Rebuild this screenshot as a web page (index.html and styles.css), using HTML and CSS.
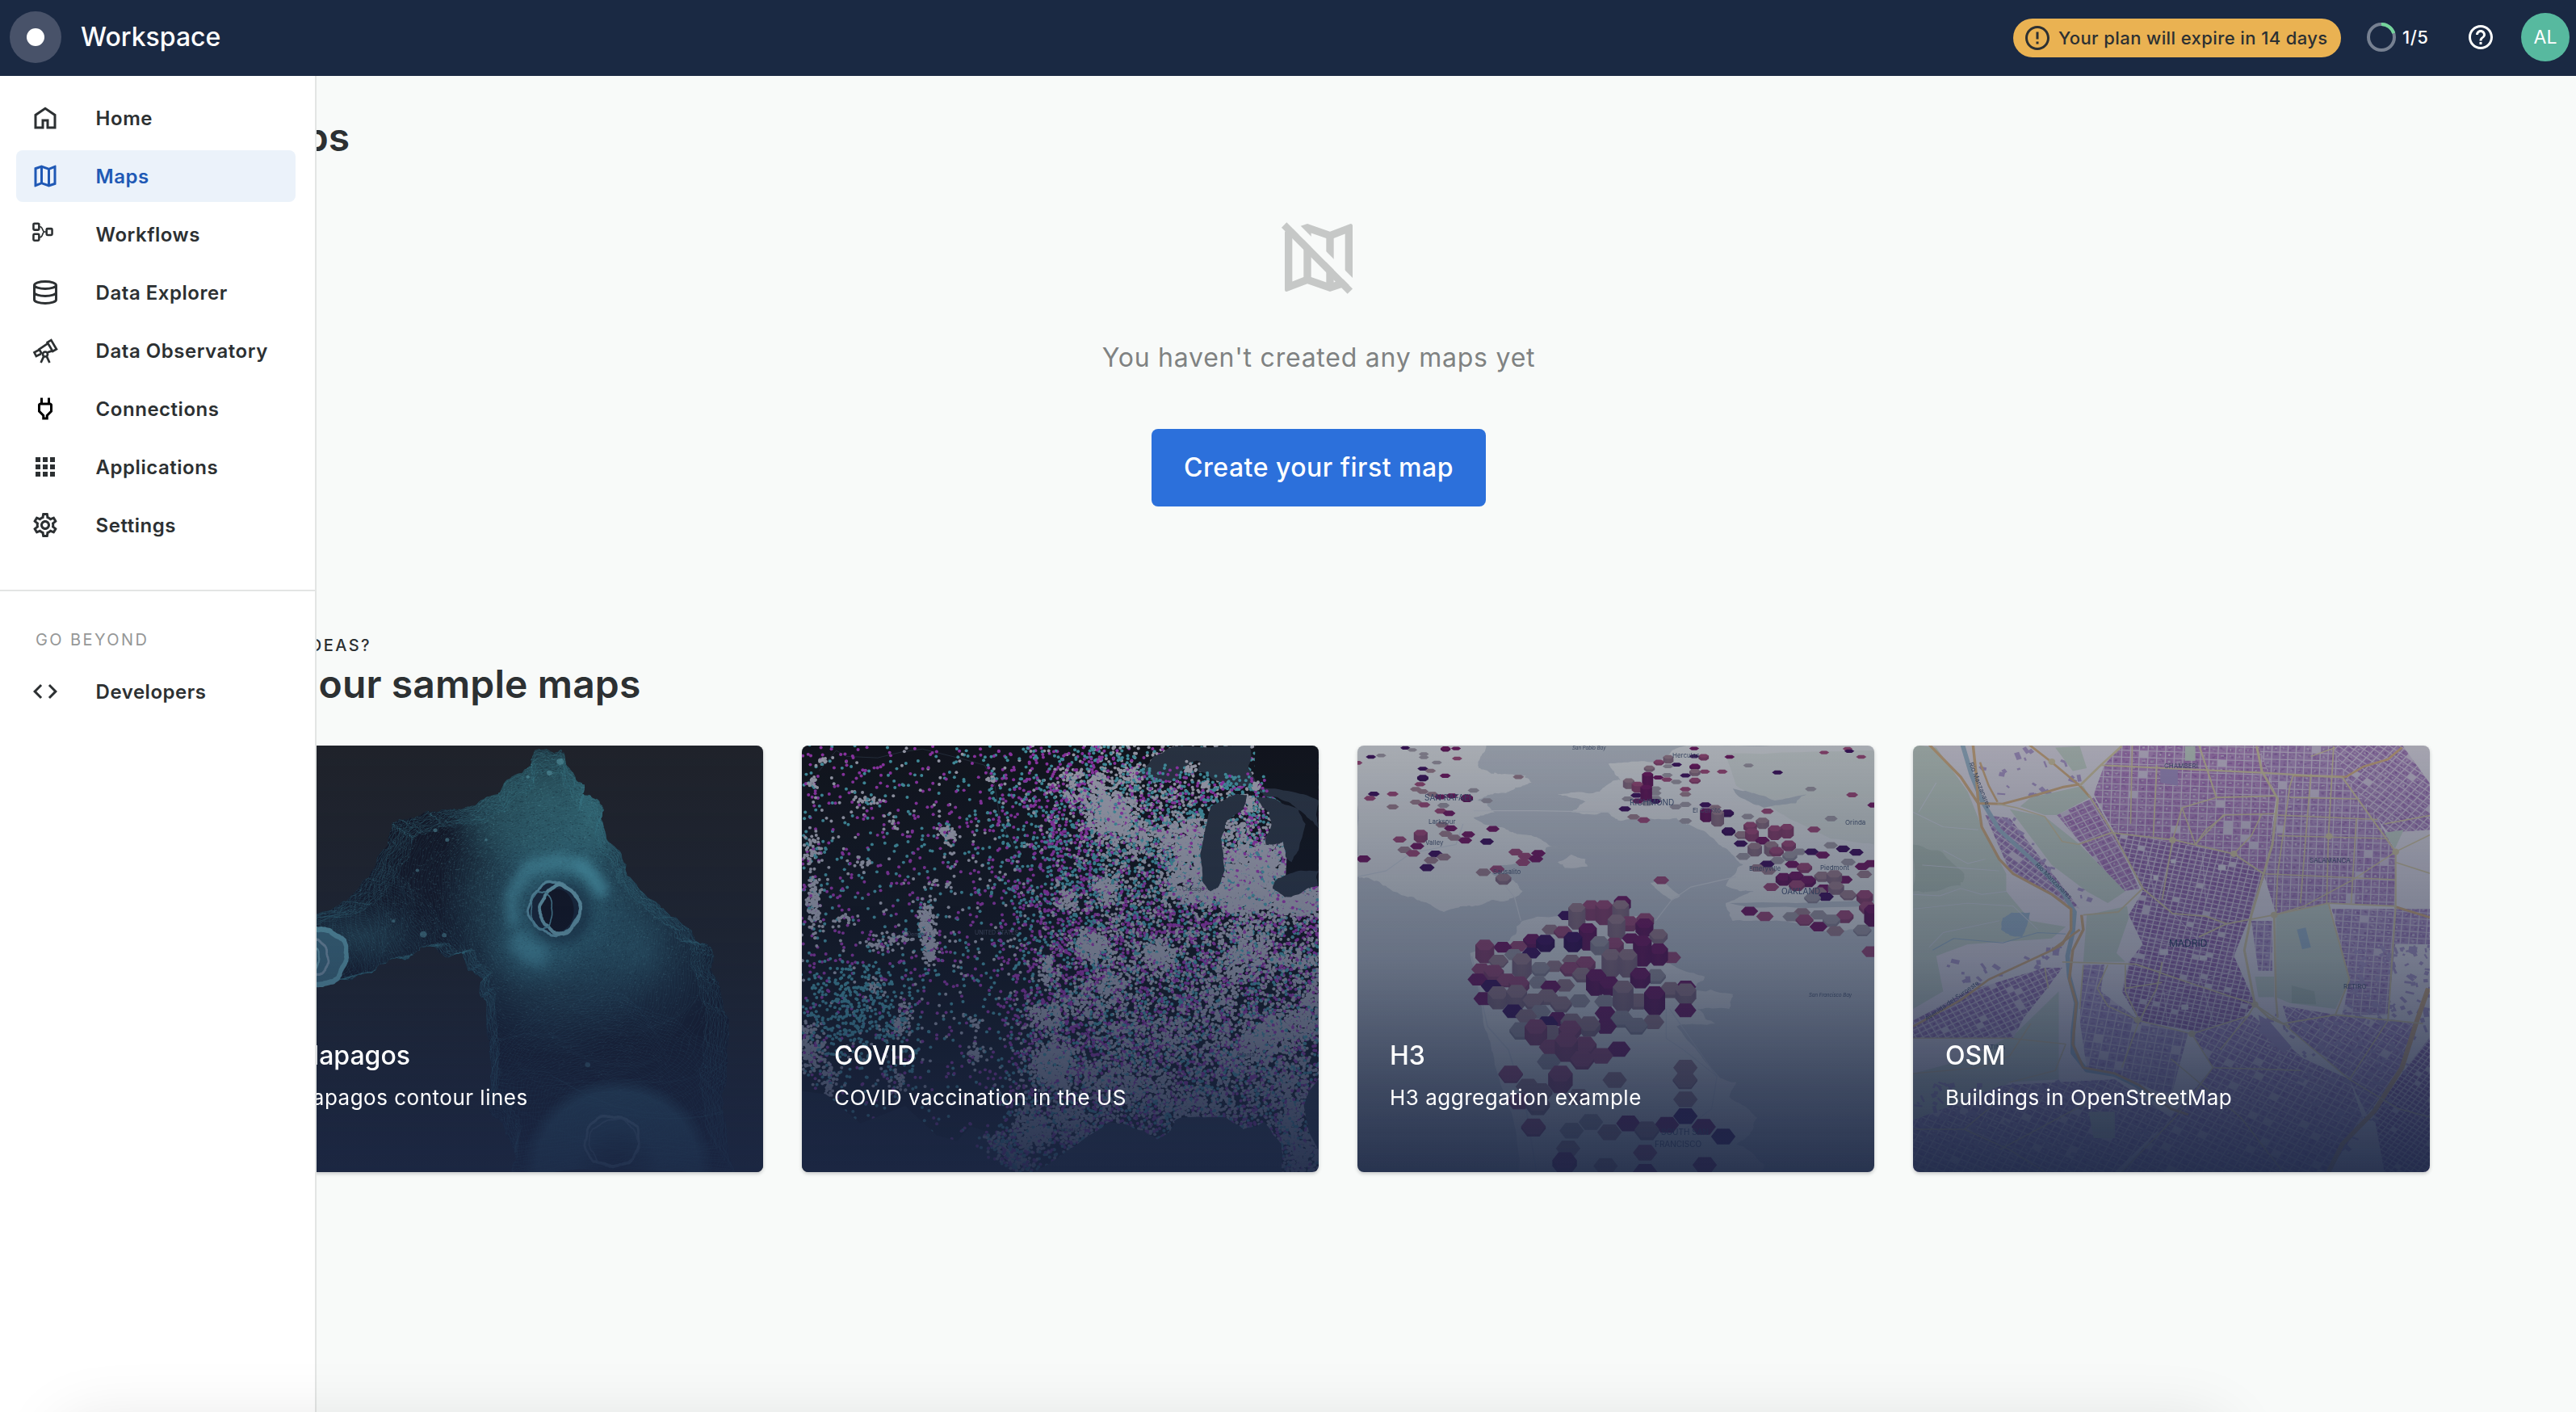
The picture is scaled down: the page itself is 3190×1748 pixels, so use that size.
FILE: index.html
```html
<!DOCTYPE html>
<html lang="en">
<head>
<meta charset="utf-8">
<title>Workspace</title>
<link rel="stylesheet" href="styles.css">
</head>
<body>
<header class="topbar">
  <span class="logo"><span class="logo-dot"></span></span>
  <span class="brand">Workspace</span>
  <div class="topbar-right">
    <span class="plan-pill">
      <svg class="icon" viewBox="0 0 24 24"><path d="M11 15h2v2h-2zm0-8h2v6h-2zm.99-5C6.47 2 2 6.48 2 12s4.47 10 9.99 10C17.52 22 22 17.52 22 12S17.52 2 11.99 2zM12 20c-4.42 0-8-3.58-8-8s3.58-8 8-8 8 3.58 8 8-3.58 8-8 8z"/></svg>
      Your plan will expire in 14 days
    </span>
    <span class="usage">
      <svg class="ring" viewBox="0 0 36 36"><circle cx="18" cy="18" r="16" class="ring-track"/><circle cx="18" cy="18" r="16" class="ring-value" pathLength="100" stroke-dasharray="20 80" transform="rotate(-90 18 18)"/></svg>
      1/5
    </span>
    <svg class="icon help" viewBox="0 0 24 24"><path d="M11 18h2v-2h-2v2zm1-16C6.48 2 2 6.48 2 12s4.48 10 10 10 10-4.48 10-10S17.52 2 12 2zm0 18c-4.41 0-8-3.59-8-8s3.59-8 8-8 8 3.59 8 8-3.59 8-8 8zm0-14c-2.21 0-4 1.79-4 4h2c0-1.1.9-2 2-2s2 .9 2 2c0 2-3 1.75-3 5h2c0-2.25 3-2.5 3-5 0-2.21-1.79-4-4-4z"/></svg>
    <span class="avatar">AL</span>
  </div>
</header>

<div class="shell">
  <aside class="drawer">
    <nav class="nav">
      <a class="nav-item"><svg class="icon" viewBox="0 0 24 24"><path d="M3 21V9l9-6 9 6v12h-8v-6h-2v6H3zm2-2h4v-6h6v6h4v-8.9l-7-4.7-7 4.7V19z"/></svg>Home</a>
      <a class="nav-item active"><svg class="icon" viewBox="0 0 24 24"><path d="M20.5 3l-.16.03L15 5.1 9 3 3.36 4.9c-.21.07-.36.25-.36.48V20.5c0 .28.22.5.5.5l.16-.03L9 18.9l6 2.1 5.64-1.9c.21-.07.36-.25.36-.48V3.5c0-.28-.22-.5-.5-.5zM10 5.47l4 1.4v11.66l-4-1.4V5.47zm-5 .99l3-1.01v11.7l-3 1.16V6.46zm14 11.08l-3 1.01V6.86l3-1.16v11.84z"/></svg>Maps</a>
      <a class="nav-item"><svg class="icon line thin" viewBox="0 0 24 24"><rect x="2.3" y="3.1" width="4.6" height="5.3" rx=".8"/><rect x="2.3" y="11.8" width="4.6" height="5.3" rx=".8"/><rect x="13.1" y="7.4" width="4.6" height="5.3" rx=".8"/><path class="hair" d="M7 5.8h1c2 0 1.6 4.2 3.4 4.2H13M7 14.4h1c2 0 1.6-4.4 3.4-4.4"/></svg>Workflows</a>
      <a class="nav-item"><svg class="icon line" viewBox="0 0 24 24"><ellipse cx="12" cy="6" rx="9" ry="3"/><path d="M3 6v12c0 1.66 4 3 9 3s9-1.34 9-3V6M3 12c0 1.66 4 3 9 3s9-1.34 9-3"/></svg>Data Explorer</a>
      <a class="nav-item"><svg class="icon line scope" viewBox="0 0 24 24"><path d="M13.8 5.3l3.1-1.9 4.4 7.4-3.1 1.8zM14.2 6.1L7 10.9l2.2 3.8M13.9 13.5l4.2-1.4M7 11.3l-4 2.2 1.6 3.2 4-2M10.9 16.6L8.4 22M13.1 16.6l2.5 5.4"/><circle cx="12" cy="15" r="2"/></svg>Data Observatory</a>
      <a class="nav-item"><svg class="icon plug" viewBox="0 0 24 24"><path d="M16 9v4.66l-3.5 3.51V19h-1v-1.83L8 13.65V9h8m0-6h-2v4h-4V3H8v4h-.01C6.9 6.99 6 7.89 6 8.98v5.52L9.5 18v3h5v-3l3.5-3.51V9c0-1.1-.9-2-2-2V3z"/></svg>Connections</a>
      <a class="nav-item"><svg class="icon" viewBox="0 0 24 24"><path d="M4 8h4V4H4v4zm6 12h4v-4h-4v4zm-6 0h4v-4H4v4zm0-6h4v-4H4v4zm6 0h4v-4h-4v4zm6-10v4h4V4h-4zm-6 4h4V4h-4v4zm6 6h4v-4h-4v4zm0 6h4v-4h-4v4z"/></svg>Applications</a>
      <a class="nav-item"><svg class="icon" viewBox="0 0 24 24"><path d="M19.43 12.98c.04-.32.07-.64.07-.98 0-.34-.03-.66-.07-.98l2.11-1.65c.19-.15.24-.42.12-.64l-2-3.46c-.09-.16-.26-.25-.44-.25-.06 0-.12.01-.17.03l-2.49 1c-.52-.4-1.08-.73-1.69-.98l-.38-2.65C14.46 2.18 14.25 2 14 2h-4c-.25 0-.46.18-.49.42l-.38 2.65c-.61.25-1.17.59-1.69.98l-2.49-1c-.06-.02-.12-.03-.18-.03-.17 0-.34.09-.43.25l-2 3.46c-.13.22-.07.49.12.64l2.11 1.65c-.04.32-.07.65-.07.98 0 .33.03.66.07.98l-2.11 1.65c-.19.15-.24.42-.12.64l2 3.46c.09.16.26.25.44.25.06 0 .12-.01.17-.03l2.49-1c.52.4 1.08.73 1.69.98l.38 2.65c.03.24.24.42.49.42h4c.25 0 .46-.18.49-.42l.38-2.65c.61-.25 1.17-.59 1.69-.98l2.49 1c.06.02.12.03.18.03.17 0 .34-.09.43-.25l2-3.46c.12-.22.07-.49-.12-.64l-2.11-1.65zm-1.98-1.71c.04.31.05.52.05.73 0 .21-.02.43-.05.73l-.14 1.13.89.7 1.08.84-.7 1.21-1.27-.51-1.04-.42-.9.68c-.43.32-.84.56-1.25.73l-1.06.43-.16 1.13-.2 1.35h-1.4l-.19-1.35-.16-1.13-1.06-.43c-.43-.18-.83-.41-1.23-.71l-.91-.7-1.06.43-1.27.51-.7-1.21 1.08-.84.89-.7-.14-1.13c-.03-.31-.05-.54-.05-.74s.02-.43.05-.73l.14-1.13-.89-.7-1.08-.84.7-1.21 1.27.51 1.04.42.9-.68c.43-.32.84-.56 1.25-.73l1.06-.43.16-1.13.2-1.35h1.39l.19 1.35.16 1.13 1.06.43c.43.18.83.41 1.23.71l.91.7 1.06-.43 1.27-.51.7 1.21-1.07.85-.89.7.14 1.13zM12 8c-2.21 0-4 1.79-4 4s1.79 4 4 4 4-1.79 4-4-1.79-4-4-4zm0 6c-1.1 0-2-.9-2-2s.9-2 2-2 2 .9 2 2-.9 2-2 2z"/></svg>Settings</a>
    </nav>
    <div class="nav-group">
      <div class="nav-label">GO BEYOND</div>
      <a class="nav-item"><svg class="icon" viewBox="0 0 24 24"><path d="M9.4 16.6L4.8 12l4.6-4.6L8 6l-6 6 6 6 1.4-1.4zm5.2 0l4.6-4.6-4.6-4.6L16 6l6 6-6 6-1.4-1.4z"/></svg>Developers</a>
    </div>
  </aside>

  <main class="content">
    <h1 class="page-title">Maps</h1>
    <section class="empty">
      <svg class="empty-icon" viewBox="0 0 24 24">
        <mask id="cut"><path fill="#fff" d="M0 0h24v24H0z"/><path fill="#000" d="M.8 0h2.85L24 20.35v2.85z"/></mask>
        <path mask="url(#cut)" d="M20.5 3l-.16.03L15 5.1 9 3 3.36 4.9c-.21.07-.36.25-.36.48V20.5c0 .28.22.5.5.5l.16-.03L9 18.9l6 2.1 5.64-1.9c.21-.07.36-.25.36-.48V3.5c0-.28-.22-.5-.5-.5zM10 5.47l4 1.4v11.66l-4-1.4V5.47zm-5 .99l3-1.01v11.7l-3 1.16V6.46zm14 11.08l-3 1.01V6.86l3-1.16v11.84z"/>
        <path d="M2.15 4l1.35-1.35L21 20.25l-1.35 1.35z"/>
      </svg>
      <p class="empty-text">You haven't created any maps yet</p>
      <button class="cta">Create your first map</button>
    </section>

    <section class="samples">
      <div class="eyebrow">NEED IDEAS?</div>
      <h2 class="samples-title">Try our sample maps</h2>
      <div class="cards">
        <article class="card">
          <canvas class="card-art" id="galapagos" width="640" height="528"></canvas>
          <div class="card-body"><h3 class="card-title">Galapagos</h3><p class="card-text">Galapagos contour lines</p></div>
        </article>
        <article class="card">
          <canvas class="card-art" id="covid" width="640" height="528"></canvas>
          <svg class="card-labels on-dark" viewBox="0 0 640 528">
            <text x="471" y="180">Chicago</text><text x="214" y="234">UNITED STATES</text><text x="130" y="236">Denver</text><text x="538" y="385">Atlanta</text><text x="317" y="478">Houston</text>
          </svg>
          <div class="card-body"><h3 class="card-title">COVID</h3><p class="card-text">COVID vaccination in the US</p></div>
        </article>
        <article class="card">
          <canvas class="card-art" id="hexes" width="640" height="528"></canvas>
          <svg class="card-labels" viewBox="0 0 640 528">
            <text x="83" y="68" class="city">SAN RAFAEL</text><text x="88" y="97">Larkspur</text><text x="84" y="123">Valley</text><text x="604" y="98">Orinda</text><text x="168" y="159">Sausalito</text><text x="337" y="74" class="city">RICHMOND</text><text x="415" y="83">El Cerrito</text><text x="390" y="15">Hercules</text><text x="485" y="155">Emeryville</text><text x="573" y="154">Piedmont</text><text x="525" y="184" class="city">OAKLAND</text><text x="559" y="311" class="bay">San Francisco Bay</text><text x="266" y="5" class="bay">San Pablo Bay</text><text x="376" y="482" class="city">SOUTH SAN</text><text x="368" y="497" class="city">FRANCISCO</text>
          </svg>
          <div class="card-body"><h3 class="card-title">H3</h3><p class="card-text">H3 aggregation example</p></div>
        </article>
        <article class="card">
          <canvas class="card-art" id="osm" width="640" height="528"></canvas>
          <svg class="card-labels" viewBox="0 0 640 528">
            <text x="311" y="28">CHAMBERÍ</text><text x="491" y="145">SALAMANCA</text><text x="317" y="249" class="city madrid">MADRID</text><text x="533" y="301">RETIRO</text><text x="86" y="376">LATINA</text><text transform="translate(17 341) rotate(-35)">Avenida del Suroeste</text><text transform="translate(69 22) rotate(68)">Río Manzanares</text><text transform="translate(151 148) rotate(45)">Río Manzanares</text>
          </svg>
          <div class="card-body"><h3 class="card-title">OSM</h3><p class="card-text">Buildings in OpenStreetMap</p></div>
        </article>
      </div>
    </section>
  </main>
  <div class="edge-shade"></div>
</div>
<script src="art.js"></script>
</body>
</html>
```
FILE: styles.css
```css
* { box-sizing: border-box; }
body {
  margin: 0;
  height: 1748px;
  display: flex;
  flex-direction: column;
  overflow: hidden;
  font-family: Inter, "Liberation Sans", sans-serif;
  color: #2c3032;
  background: #f8faf9;
}
h1, h2, h3, p { margin: 0; }
.icon { width: 36px; height: 36px; flex: none; fill: currentColor; }
.icon.line { fill: none; stroke: currentColor; stroke-width: 2; }
.icon.thin { stroke-width: 1.7; }
.icon .hair { stroke-width: 1.1; }
.icon.scope { stroke-width: 1.8; }
.icon.plug { color: #000; }

.topbar {
  height: 94px;
  flex: none;
  display: flex;
  align-items: center;
  padding: 0 8px 2px 12px;
  background: #1a2943;
  color: #fff;
}
.logo {
  width: 64px;
  height: 64px;
  border-radius: 50%;
  display: grid;
  place-items: center;
  background: #485269;
}
.logo-dot { width: 22px; height: 22px; border-radius: 50%; background: #fff; }
.brand { margin-left: 24px; font-size: 32px; font-weight: 500; line-height: 48px; }
.topbar-right { margin-left: auto; display: flex; align-items: center; }
.plan-pill {
  height: 48px;
  width: 406px;
  margin-top: 2px;
  padding-left: 12px;
  display: flex;
  align-items: center;
  gap: 8px;
  border-radius: 24px;
  background: #eab252;
  color: #2c3032;
  font-size: 22px;
  font-weight: 500;
  letter-spacing: .4px;
  white-space: nowrap;
}
.usage { margin-left: 32px; width: 123px; display: flex; align-items: center; gap: 8px; font-size: 22px; font-weight: 500; letter-spacing: .5px; }
.ring { width: 36px; height: 36px; fill: none; stroke-width: 4; }
.ring-track { stroke: #768091; }
.ring-value { stroke: #74d59b; }
.help { margin-right: 32px; }
.avatar {
  width: 60px;
  height: 60px;
  border-radius: 50%;
  display: grid;
  place-items: center;
  background: #57b99f;
  color: #fff;
  font-size: 23px;
}

.shell { position: relative; flex: 1; overflow: hidden; }
.drawer {
  position: absolute;
  z-index: 2;
  inset: 0 auto 0 0;
  width: 392px;
  background: #fff;
  border-right: 2px solid #e3e5e4;
}
.nav { display: flex; flex-direction: column; gap: 8px; padding: 20px 24px 48px 20px; }
.nav-item {
  height: 64px;
  display: flex;
  align-items: center;
  gap: 44.6px;
  padding-left: 18px;
  border-radius: 8px;
  font-size: 24px;
  font-weight: 600;
  letter-spacing: .53px;
}
.nav-item.active { background: #ebf2fa; color: #2059b5; }
.nav-group { border-top: 2px solid #e3e5e4; padding: 44px 24px 0 20px; }
.nav-label { padding: 0 0 16px 24px; font-size: 20px; line-height: 32px; letter-spacing: 2.4px; color: #959797; }

.content { padding: 44px 181px 0 257px; }
.page-title { padding-left: 48px; font-size: 48px; line-height: 64px; font-weight: 600; }
.empty { display: flex; flex-direction: column; align-items: center; padding-top: 61px; }
.empty-icon { width: 112px; height: 112px; fill: #c6c8c7; }
.empty-text { margin-top: 44px; font-size: 32px; line-height: 48px; letter-spacing: .76px; color: #7f8282; }
.cta {
  width: 414px;
  height: 96px;
  margin-top: 64px;
  padding: 0;
  border: 0;
  border-radius: 8px;
  background: #2c70db;
  color: #fff;
  font: 500 32px/48px Inter, "Liberation Sans", sans-serif;
  letter-spacing: .5px;
}
.samples { padding: 156px 0 0 48px; }
.eyebrow { font-size: 20px; line-height: 32px; font-weight: 500; letter-spacing: 2.4px; }
.samples-title { font-size: 48px; line-height: 64px; font-weight: 600; letter-spacing: .12px; }
.cards { display: grid; grid-template-columns: repeat(4, 640px); gap: 48px; margin-top: 44px; }
.card {
  position: relative;
  height: 528px;
  border-radius: 8px;
  overflow: hidden;
  display: flex;
  flex-direction: column;
  justify-content: flex-end;
  color: #fff;
  box-shadow: 0 2px 4px rgba(44, 48, 50, .25);
}
.card-art, .card-labels { position: absolute; inset: 0; width: 640px; height: 528px; }
.card-labels { font-size: 8px; fill: #4c5b78; }
.card-labels.on-dark { font-size: 7px; fill: #5a6070; }
.card-labels .city { font-size: 10px; fill: #44557a; }
.card-labels .madrid { font-size: 12px; fill: #2c4468; }
.card-labels .bay { font-size: 6px; font-style: italic; }
.card::after {
  content: "";
  position: absolute;
  inset: 0;
  background: linear-gradient(rgba(24, 30, 48, .33), rgba(24, 36, 62, .56) 50%, rgba(26, 38, 66, .8) 80%, rgba(27, 39, 68, .93));
}
.card-body { position: relative; z-index: 1; padding: 0 40px 72px; }
.card-title { font-size: 32px; line-height: 48px; font-weight: 500; }
.card-text { margin-top: 8px; font-size: 26px; line-height: 40px; letter-spacing: .5px; }
.edge-shade {
  position: absolute;
  z-index: 3;
  left: 70px;
  bottom: -110px;
  width: 2690px;
  height: 100px;
  border-radius: 40px;
  box-shadow: 0 0 80px rgba(0, 0, 0, .1);
}
```
FILE: art.js
```js
// Paints the preview picture of each sample map card.
let seed = 7;
const rnd = () => { seed = (seed * 1664525 + 1013904223) >>> 0; return seed / 4294967296; };
const gauss = () => (rnd() + rnd() + rnd() + rnd() - 2) * 1.2;
const setup = (id, sx, sy, dx, dy) => {
  const c = document.getElementById(id).getContext('2d');
  c.setTransform(1 / sx, 0, 0, 1 / sy, dx, dy);
  return c;
};
const trace = (c, pts, close = true) => {
  c.beginPath();
  for (let i = 0; i < pts.length; i += 2) i ? c.lineTo(pts[i], pts[i + 1]) : c.moveTo(pts[0], pts[1]);
  if (close) c.closePath();
};
const poly = (c, color, pts) => { trace(c, pts); c.fillStyle = color; c.fill(); };
const line = (c, color, w, pts) => { trace(c, pts, false); c.strokeStyle = color; c.lineWidth = w; c.lineJoin = 'round'; c.stroke(); };
// Roughens a polygon outline into a coast-like one.
const rough = (pts, amp, rounds = 3) => {
  for (let r = 0; r < rounds; r++) {
    const out = [];
    for (let i = 0; i < pts.length; i += 2) {
      const j = (i + 2) % pts.length;
      out.push(pts[i], pts[i + 1], (pts[i] + pts[j]) / 2 + gauss() * amp, (pts[i + 1] + pts[j + 1]) / 2 + gauss() * amp);
    }
    pts = out; amp /= 2;
  }
  return pts;
};
const inside = (pts, x, y) => {
  let r = false;
  for (let i = 0, j = pts.length - 2; i < pts.length; j = i, i += 2)
    if ((pts[i + 1] > y) !== (pts[j + 1] > y) && x < (pts[j] - pts[i]) * (y - pts[i + 1]) / (pts[j + 1] - pts[i + 1]) + pts[i]) r = !r;
  return r;
};

function galapagos() {
  const c = setup('galapagos', 2.7034, 2.119, 75, -183);
  c.fillStyle = '#232528'; c.fillRect(-400, 300, 2100, 1400);
  const land = rough([-210, 900, 30, 830, 170, 765, 270, 650, 285, 590, 400, 560, 500, 555, 640, 515, 720, 460, 760, 405, 860, 405, 930, 490, 975, 530, 1010, 640, 1090, 740, 1200, 820, 1300, 900, 1365, 940, 1380, 1010, 1410, 1100, 1405, 1250, 1390, 1340, 1440, 1520, 680, 1520, 690, 1440, 610, 1350, 612, 1200, 600, 1060, 590, 1000, 520, 930, 400, 915, 300, 945, 170, 990, 60, 1010, -200, 1060], 16, 4);
  poly(c, '#10121d', land);
  c.save(); trace(c, land); c.clip();
  const glow = (x, y, rx, ry, stops) => {
    c.save(); c.translate(x, y); c.scale(1, ry / rx);
    const g = c.createRadialGradient(0, 0, 0, 0, 0, rx);
    stops.forEach(([o, col]) => g.addColorStop(o, col));
    c.fillStyle = g; c.fillRect(-rx, -rx, 2 * rx, 2 * rx); c.restore();
  };
  glow(840, 790, 400, 420, [[0, 'rgba(75,175,190,.9)'], [.4, 'rgba(70,165,180,.6)'], [.7, 'rgba(62,145,155,.35)'], [1, 'rgba(50,130,145,0)']]);
  glow(800, 540, 360, 190, [[0, 'rgba(70,155,160,.6)'], [.6, 'rgba(65,145,150,.45)'], [1, 'rgba(60,140,150,0)']]);
  glow(950, 580, 120, 220, [[0, 'rgba(80,175,180,.45)'], [1, 'rgba(60,140,150,0)']]);
  glow(1120, 930, 300, 240, [[0, 'rgba(65,145,160,.6)'], [1, 'rgba(50,120,140,0)']]);
  glow(750, 920, 170, 120, [[0, 'rgba(85,190,205,.6)'], [1, 'rgba(60,150,165,0)']]);
  glow(180, 890, 250, 100, [[0, 'rgba(70,150,160,.45)'], [1, 'rgba(60,140,150,0)']]);
  const contours = (x, y, from, to, step, sq, color, amp) => {
    const p = [rnd() * 6, rnd() * 6, rnd() * 6];
    c.lineWidth = 1.3; c.strokeStyle = color;
    for (let r = from; r < to; r += step) {
      c.beginPath();
      for (let a = 0; a <= 6.3; a += .03) {
        const q = r * (1 + amp * Math.sin(3 * a + p[0]) + amp * .6 * Math.sin(5 * a + p[1] + r / 90) + amp * .3 * Math.sin(13 * a + p[2] + r / 25) + amp * .12 * Math.sin(31 * a + r / 9)) + gauss() * 2.5;
        c.lineTo(x + q * Math.cos(a), y + q * sq * Math.sin(a));
      }
      c.stroke();
    }
  };
  contours(820, 820, 130, 560, 7, .85, 'rgba(100,205,215,.22)', .05);
  contours(820, 820, 560, 900, 12, .85, 'rgba(90,195,205,.30)', .06);
  contours(1010, 1420, 80, 480, 9, .8, 'rgba(90,190,210,.30)', .05);
  contours(30, 940, 80, 500, 9, .5, 'rgba(90,195,205,.28)', .05);
  // Shoreline contours that follow the outline of the land.
  for (let k = 1; k > .86; k -= .011) {
    c.beginPath();
    for (let i = 0; i < land.length; i += 2) c.lineTo(820 + (land[i] - 820) * k + gauss() * 3, 860 + (land[i + 1] - 860) * k + gauss() * 3);
    c.closePath(); c.lineWidth = 1.6; c.strokeStyle = 'rgba(80,175,185,.42)'; c.stroke();
  }
  for (let i = 0; i < 22000; i++) {
    const x = 780 + gauss() * 520, y = 760 + gauss() * 400;
    c.fillStyle = rnd() < .5 ? 'rgba(15,22,34,.22)' : 'rgba(120,215,220,.22)';
    c.fillRect(x, y, 2.7 + rnd() * 3, 2.2);
  }
  glow(1040, 1500, 320, 240, [[0, 'rgba(20,40,55,.5)'], [.45, 'rgba(80,170,200,.6)'], [.85, 'rgba(80,170,195,.6)'], [.95, 'rgba(60,130,150,.3)'], [1, 'rgba(50,130,150,0)']]);
  c.restore();
  const ring = (x, y, rx, ry, w, color, rot = 0) => {
    c.beginPath();
    for (let a = 0; a < 6.3; a += .05) { const k = 1 + .04 * Math.sin(4 * a + rx) + .025 * Math.sin(9 * a) + gauss() * .012; c.lineTo(x + rx * k * Math.cos(a + rot), y + ry * k * Math.sin(a + rot)); }
    c.closePath(); c.lineWidth = w; c.strokeStyle = color; c.stroke();
  };
  c.filter = 'blur(6px)';
  line(c, 'rgba(100,210,225,.6)', 42, [690, 860, 685, 780, 740, 710, 840, 690, 930, 705, 1000, 780]);
  line(c, 'rgba(100,215,230,.6)', 30, [900, 700, 950, 725, 990, 775]);
  line(c, 'rgba(100,210,225,.5)', 60, [690, 890, 740, 930, 800, 945]);
  c.fillStyle = 'rgba(22,50,66,.6)'; c.beginPath(); c.ellipse(850, 825, 105, 85, 0, 0, 7); c.fill();
  c.filter = 'none';
  c.beginPath(); c.ellipse(828, 815, 84, 68, 0, 0, 7); c.fillStyle = '#16283a'; c.fill();
  c.beginPath(); c.ellipse(838, 820, 56, 56, .3, 0, 7); c.fillStyle = '#0c0e18'; c.fill();
  ring(828, 815, 84, 68, 7, '#7ccbdc'); ring(848, 818, 66, 62, 10, '#8ad6e4', .3); ring(786, 820, 36, 50, 4, '#6ab9ca');
  c.beginPath(); c.ellipse(30, 940, 108, 76, 0, 0, 7); c.fillStyle = '#4b8a9c'; c.fill();
  ring(30, 940, 104, 74, 14, '#79d2e0'); ring(10, 945, 62, 50, 7, '#a0c8da'); ring(0, 945, 42, 36, 6, '#8fdbe6');
  ring(1022, 1425, 92, 66, 7, '#7fb4cc'); ring(1028, 1430, 82, 62, 4, '#6fa0bc');
  [[390, 883, 12], [370, 715, 6], [430, 610, 7], [470, 635, 7], [812, 460, 9], [848, 430, 12], [740, 470, 6], [600, 635, 5], [460, 885, 8], [290, 848, 6], [940, 1225, 9]].forEach(([x, y, r]) => { c.beginPath(); c.ellipse(x, y, r, r * .7, 0, 0, 7); c.fillStyle = 'rgba(120,215,225,.55)'; c.fill(); });
}

function covid() {
  const c = setup('covid', 2.3403, 2.751, -13, -23);
  c.fillStyle = '#0e1014'; c.fillRect(0, 0, 1600, 1600);
  const water = '#303b48';
  const lakes = [
    rough([1000, 160, 1050, 100, 1110, 65, 1330, 60, 1325, 130, 1345, 190, 1320, 200, 1240, 185, 1180, 150, 1190, 120, 1160, 120, 1120, 180, 1040, 180], 6),
    rough([1215, 560, 1190, 520, 1185, 430, 1200, 340, 1215, 270, 1270, 235, 1320, 232, 1310, 280, 1260, 320, 1245, 380, 1255, 480, 1240, 540], 4),
    rough([1345, 240, 1400, 245, 1470, 280, 1490, 330, 1470, 420, 1450, 460, 1432, 440, 1425, 390, 1392, 400, 1375, 400, 1390, 340, 1385, 290], 4),
    rough([1350, 205, 1450, 220, 1528, 250, 1528, 345, 1490, 300, 1440, 255, 1370, 235], 5),
    rough([1395, 550, 1410, 515, 1470, 490, 1528, 490, 1528, 540, 1470, 570, 1430, 580], 4)];
  const dot = (x, y, k) => {
    c.fillStyle = k === 0 ? '#d0d0dc' : k === 1 ? '#54c0cc' : '#c03cd4';
    c.beginPath(); c.ellipse(x, y, 4.7, 5.4, 0, 0, 7); c.fill();
  };
  line(c, water, 2, [80, 150, 130, 80, 160, 100, 250, 105, 320, 85, 380, 75, 500, 110, 560, 130, 590, 200, 605, 320, 660, 440]);
  const dens = (x, y) => {
    let d = x < 560 ? .13 : x < 900 ? .13 + (x - 560) / 340 * .8 : .93;
    if (y < 200 && x > 560) d *= .45 + (x < 1000 ? .3 : 0);
    if (x > 380 && x < 600 && y > 850) d *= .6;
    if (y > 850 && x < 400) d *= 1.3;
    if (y > 1200 && x < 600) d *= .5;
    return d;
  };
  for (let i = 0; i < 27000; i++) {
    const x = 30 + rnd() * 1500, y = 60 + rnd() * 1460;
    if (rnd() > dens(x, y)) continue;
    const south = y > 620 || x < 500, teal = (y > 850 && x < 400) || (y < 560 && x > 900);
    const r = rnd(), w = x > 900 ? .38 : .16;
    dot(x, y, r < w ? 0 : r < w + (1 - w) * (teal ? .66 : south ? .42 : .5) ? 1 : 2);
  }
  const blobs = [[930, 295, 42, 40, 700], [890, 200, 20, 30, 90], [980, 170, 20, 20, 60], [820, 180, 30, 25, 60], [835, 240, 30, 15, 60], [1000, 370, 90, 50, 250], [1150, 360, 45, 45, 220], [1150, 470, 45, 70, 550], [1190, 570, 60, 22, 260], [910, 560, 30, 30, 130], [800, 590, 22, 30, 90], [1300, 530, 60, 70, 1100], [1390, 480, 35, 60, 450], [1340, 430, 45, 30, 220], [1290, 350, 25, 30, 60], [1330, 260, 15, 20, 40], [1490, 600, 45, 30, 400], [1420, 590, 50, 30, 260], [870, 745, 30, 35, 240], [1060, 780, 36, 34, 230], [745, 830, 18, 35, 80], [390, 665, 16, 35, 120], [400, 750, 13, 35, 110], [300, 715, 40, 12, 40], [65, 600, 13, 60, 130], [60, 420, 16, 35, 60], [60, 185, 10, 15, 18], [90, 115, 10, 10, 12], [220, 250, 25, 14, 28], [460, 370, 16, 18, 40], [440, 345, 12, 12, 20], [580, 165, 10, 14, 14], [210, 460, 14, 14, 14], [295, 325, 8, 16, 10], [760, 1150, 42, 55, 560], [735, 990, 30, 30, 130], [830, 950, 90, 35, 180], [920, 870, 50, 50, 140], [900, 1180, 90, 50, 220], [1000, 1230, 90, 55, 240], [700, 1370, 40, 45, 300], [820, 1350, 50, 45, 220], [1230, 940, 40, 60, 140], [1330, 740, 45, 70, 230], [1280, 810, 50, 50, 150], [1450, 800, 60, 20, 100], [1360, 1080, 70, 50, 330], [1440, 1020, 60, 40, 300], [1510, 950, 30, 60, 170], [1250, 1130, 50, 60, 160], [1430, 1200, 70, 50, 220], [1450, 1330, 25, 60, 250], [1480, 1460, 35, 50, 260], [60, 1120, 25, 35, 120], [110, 1200, 15, 35, 60], [50, 1040, 20, 25, 40], [315, 1020, 16, 25, 45], [330, 965, 14, 25, 30], [240, 890, 16, 20, 24], [530, 1110, 18, 22, 40], [530, 1015, 10, 16, 16], [310, 1210, 18, 30, 30], [1100, 1040, 40, 50, 110], [970, 1040, 50, 50, 110], [1180, 1290, 110, 35, 260], [230, 745, 30, 10, 20], [160, 655, 25, 12, 20], [430, 535, 20, 12, 14]];
  blobs.forEach(([x, y, a, b, n]) => { for (let i = 0; i < n; i++) dot(x + gauss() * a * 1.15, y + gauss() * b * 1.15, rnd() < .88 ? 0 : rnd() < .5 ? 1 : 2); });
  for (let i = 0; i < 330; i++) dot(185 + gauss() * 110, 960 + gauss() * 120, 1);
  poly(c, '#0e1014', [1345, 60, 1528, 60, 1528, 535, 1430, 560, 1436, 440, 1470, 300, 1340, 190]);
  lakes.forEach(l => poly(c, water, l));
  poly(c, '#1a212b', [30, 1240, 100, 1250, 200, 1350, 330, 1290, 420, 1390, 480, 1410, 520, 1360, 570, 1380, 640, 1520, 30, 1520]);
  poly(c, water, rough([700, 1520, 780, 1460, 840, 1410, 920, 1345, 1000, 1370, 1060, 1405, 1110, 1350, 1130, 1330, 1260, 1330, 1310, 1370, 1370, 1345, 1420, 1420, 1420, 1520], 6));
  poly(c, water, [1528, 1200, 1500, 1240, 1485, 1290, 1500, 1380, 1528, 1440]);
  for (let i = 0; i < 260; i++) { const t = rnd(); dot(590 + t * 80 + gauss() * 30, 1390 + t * 110 + gauss() * 20, rnd() < .4 ? 0 : rnd() < .5 ? 1 : 2); }
  // A few scattered places around the upper lakes.
  for (let i = 0; i < 110; i++) { const x = 1000 + rnd() * 380; dot(x, 165 + Math.max(0, x - 1100) * .12 + gauss() * 22, 1 + (rnd() < .4)); }
  [[1150, 140], [1345, 205], [1200, 200]].forEach(([x, y]) => { for (let i = 0; i < 16; i++) dot(x + gauss() * 9, y + gauss() * 12, 0); });
}

function hexes() {
  const c = setup('hexes', 2.3059, 2.751, -21, -23);
  c.fillStyle = '#cbd2da'; c.fillRect(0, 0, 1600, 1600);
  const land = '#eef1f2', green = '#e3eae6';
  poly(c, land, rough([48, 60, 415, 60, 395, 140, 440, 155, 530, 165, 545, 190, 500, 205, 440, 225, 390, 250, 440, 290, 380, 310, 470, 345, 560, 375, 620, 410, 560, 440, 470, 470, 430, 500, 500, 530, 520, 560, 480, 590, 380, 610, 295, 630, 220, 590, 150, 560, 90, 520, 48, 510], 9, 4));
  poly(c, land, rough([765, 125, 900, 120, 1000, 60, 1524, 60, 1524, 680, 1400, 700, 1320, 670, 1120, 660, 1100, 600, 1180, 560, 1100, 540, 1150, 470, 1080, 400, 990, 330, 960, 310, 800, 320, 760, 290, 660, 290, 700, 255, 620, 230, 740, 220, 800, 180], 8, 4));
  poly(c, green, rough([1100, 90, 1524, 80, 1524, 400, 1400, 380, 1250, 290, 1130, 200], 8));
  poly(c, '#c3ccd4', rough([1120, 210, 1180, 225, 1240, 250, 1330, 230, 1300, 260, 1210, 275, 1160, 250], 5));
  poly(c, '#c8d0d8', rough([1110, 600, 1300, 600, 1524, 590, 1524, 610, 1300, 615, 1180, 615], 3));
  poly(c, land, rough([620, 460, 660, 435, 700, 450, 705, 475, 640, 480], 4));
  poly(c, land, rough([885, 530, 930, 535, 970, 575, 945, 590, 915, 565], 3));
  poly(c, land, rough([370, 770, 480, 730, 520, 660, 640, 640, 870, 640, 930, 800, 1040, 850, 1000, 900, 1120, 910, 1110, 960, 1020, 960, 1070, 1010, 960, 1020, 1080, 1190, 1130, 1210, 1110, 1260, 1190, 1330, 1170, 1380, 1130, 1420, 1210, 1490, 1190, 1520, 510, 1520, 490, 1320, 440, 1150, 410, 1020], 8, 4));
  line(c, '#e6eaee', 3, [515, 660, 497, 580, 470, 540]);
  line(c, '#e6eaee', 3, [900, 660, 945, 590, 1000, 545, 1130, 510]);
  line(c, '#e6eaee', 3, [380, 285, 560, 285, 770, 290]);
  line(c, '#dbe2ea', 4, [375, 780, 420, 1020, 480, 1100, 530, 1300, 560, 1520]);
  line(c, '#dbe2ea', 3, [930, 960, 930, 1060, 980, 1100, 1075, 1190, 1060, 1300, 960, 1390]);
  line(c, '#dbe2ea', 3, [48, 510, 130, 490, 200, 430, 330, 400, 350, 330]);
  line(c, '#dbe2ea', 3, [940, 960, 1010, 1080, 1075, 1190]);
  const pal = { g: ['#a9a2ac', '#a39daa'], p: ['#a88694', '#9b7a90'], r: ['#a84c7c', '#9c4776'], m: ['#7b1765', '#6e155f'], d: ['#431060', '#3b0e58'] };
  const size = y => Math.min(35, 14 + (y - 60) * .019);
  const hex = (x, y, h, k) => {
    const s = size(y), f = Math.min(.88, .46 + (y - 60) / 1500 * .65), t = f * s * .87, q = s * .5;
    if (h) {
      const g = c.createLinearGradient(x - s, 0, x + s, 0);
      g.addColorStop(0, pal[k][1]); g.addColorStop(.5, pal[k][0]); g.addColorStop(1, pal[k][1]);
      c.fillStyle = g; c.beginPath();
      c.moveTo(x - s, y); c.lineTo(x - s, y + h); c.lineTo(x - q, y + h + t); c.lineTo(x + q, y + h + t); c.lineTo(x + s, y + h); c.lineTo(x + s, y); c.fill();
      c.fillStyle = 'rgba(20,10,40,.12)'; c.fill();
    }
    poly(c, pal[k][0], [x - s, y, x - q, y - t, x + q, y - t, x + s, y, x + q, y + t, x - q, y + t]);
  };
  // Each entry: x y height colour.
  const cells = `185 71 0 d,205 78 0 g,300 72 6 m,330 73 0 m,87 102 0 d,116 97 0 g,238 92 0 g,238 103 0 g,333 107 0 r,275 121 0 g,48 122 0 r,235 142 0 d,257 149 0 p,235 170 8 d,299 166 0 m,227 195 0 r,215 212 0 p,235 220 0 p,262 229 0 p,285 238 0 m,318 234 0 m,361 238 10 m,380 216 0 g,418 251 0 g,215 256 0 p,239 265 0 r,294 267 0 g,149 272 0 p,84 243 0 r,95 228 0 d,149 228 0 r,286 286 0 r,310 294 0 m,508 170 0 p,290 333 0 p,315 345 0 m,300 364 0 p,325 377 0 p,435 347 0 m,365 366 0 m,356 386 0 m,418 390 0 d,229 360 24 r,169 383 0 r,183 418 0 p,219 406 0 m,207 430 0 r,271 432 0 d,295 443 0 p,259 454 0 p,247 479 0 d,66 449 0 m,500 426 0 r,527 440 0 r,565 430 0 m,558 449 0 m,521 461 0 r,447 484 0 r,408 495 0 p,465 512 12 p,
  1010 73 0 m,1010 100 0 d,1037 98 10 r,1111 102 0 m,1165 131 0 g,1090 152 0 r,1248 155 0 d,1012 132 8 m,1012 150 10 p,1040 152 0 r,1012 180 6 r,936 102 16 p,909 118 6 r,960 128 0 d,935 134 0 g,882 138 8 p,907 172 0 m,933 164 0 g,932 179 0 r,985 165 0 d,959 187 0 g,823 182 22 p,848 194 22 r,900 210 0 g,900 225 0 g,845 233 0 d,900 243 0 g,820 245 0 g,877 160 40 m,873 205 40 m,898 253 0 d,850 252 0 m,812 279 0 d,875 260 0 g,957 272 0 g,985 264 0 g,985 212 0 r,985 229 0 p,837 306 0 p,866 317 0 r,985 320 0 g,1042 265 0 d,1070 274 0 p,1343 211 0 g,1461 231 0 r,1381 87 0 r,1453 82 0 d,1487 102 0 r,1448 74 0 r,1522 266 0 m,
  1045 285 30 m,1105 290 8 d,1077 290 40 p,1219 287 0 r,1163 305 0 g,1108 352 8 d,1145 365 6 p,1170 333 15 r,1205 318 20 p,1240 345 30 r,1275 340 30 r,1175 355 25 r,1352 349 0 r,1401 312 0 g,1143 397 0 d,1205 385 5 m,1230 400 30 p,1183 405 25 p,1280 397 15 r,1245 420 10 r,1310 425 0 g,1283 435 10 g,1150 441 0 g,1345 425 0 d,1377 436 0 m,1400 403 0 g,1435 415 0 d,1473 427 0 d,1218 467 0 d,1248 455 0 g,1190 480 0 p,1222 490 0 p,1290 468 0 m,1325 475 10 r,1265 510 18 m,1300 505 25 m,1335 520 12 m,1303 535 10 r,1375 505 10 p,1410 500 25 p,1450 460 0 g,1490 475 0 m,1515 465 0 m,1496 502 0 p,1440 520 0 m,1380 550 0 m,1365 560 6 p,1415 540 18 p,1385 578 0 d,1348 580 6 g,1230 545 0 r,1450 570 6 p,1497 570 20 r,1505 610 12 r,1168 627 0 m,1212 645 0 r,1287 646 0 g,1318 632 0 p,1325 655 6 r,1365 640 0 g,1440 640 12 r,1402 655 10 g,1365 680 0 m,1413 695 0 p,1490 690 6 g,1520 620 45 m,1515 765 0 r,916 522 0 r,
  645 642 0 d,805 590 25 m,715 605 40 r,752 605 55 r,800 605 40 p,675 615 60 p,825 660 20 r,870 650 20 r,788 655 55 p,868 668 30 m,600 690 0 p,635 695 8 r,706 685 60 m,908 705 16 p,830 720 0 m,548 722 16 m,585 725 24 d,664 715 35 d,463 750 0 m,507 747 0 r,412 742 45 r,740 730 30 g,782 735 20 r,862 728 70 m,908 755 40 m,545 770 0 d,495 775 0 g,773 775 60 p,820 775 60 p,945 785 0 r,451 795 6 p,660 795 0 p,518 790 50 p,570 820 10 g,700 800 20 r,655 820 10 r,610 815 0 p,402 825 0 r,438 830 15 r,392 860 0 m,475 860 6 r,430 882 0 d,510 870 20 r,565 870 0 g,690 840 10 p,730 845 50 m,768 870 25 m,900 845 10 g,856 840 30 m,600 885 0 m,640 880 0 p,410 925 0 m,450 905 35 p,503 900 40 p,550 930 10 p,590 915 10 p,630 940 10 p,683 933 0 g,570 970 0 g,493 968 0 d,755 935 0 g,807 885 65 p,850 930 10 p,897 905 55 m,942 890 12 p,986 885 0 m,986 895 30 p,985 965 0 m,757 975 0 m,530 985 0 p,620 995 0 m,590 1010 0 d,515 1030 10 g,660 1000 10 p,710 1010 20 p,757 1020 0 m,803 990 10 g,845 1015 8 g,893 1005 0 p,558 1020 40 r,600 1040 0 p,655 1025 20 r,645 1065 50 r,698 1080 20 r,600 1090 0 r,690 1130 10 r,745 1120 0 r,795 1097 0 m,595 1140 0 g,486 1180 6 r,783 1202 0 p,985 1160 0 p,984 1200 6 p,985 1268 0 p,535 1225 0 p,628 1180 40 r,570 1240 10 p,510 1275 0 r,563 1280 15 p,680 1260 0 p,985 1325 0 d,551 1360 8 r,715 1345 0 g,660 1375 0 g,768 1380 0 p,822 1350 0 m,875 1370 10 p,932 1355 0 m,1037 1362 0 m,1093 1395 0 d,650 1435 0 p,870 1450 0 r,640 1475 20 m,757 1495 0 p,870 1515 0 m,1040 1492 0 m`;
  cells.split(',').map(r => r.trim().split(' ')).sort((a, b) => (+a[1] + +a[2]) - (+b[1] + +b[2])).forEach(([x, y, h, k]) => hex(+x, +y, +h, k));
}

function osm() {
  const c = setup('osm', 2.3059, 2.751, -19, -23);
  c.fillStyle = '#eae6ee'; c.fillRect(0, 0, 1600, 1600);
  const green = '#ccdace', water = '#a4c0d4', roadY = '#dcd0a8', roadO = '#dcb684';
  poly(c, green, [44, 60, 110, 70, 200, 220, 240, 340, 310, 500, 310, 560, 380, 660, 480, 680, 440, 720, 200, 740, 110, 780, 130, 900, 44, 960]);
  poly(c, '#bccdbf', rough([44, 400, 130, 430, 190, 500, 180, 540, 100, 560, 44, 560], 6));
  poly(c, green, [44, 1180, 200, 1130, 340, 1040, 460, 900, 460, 1200, 320, 1210, 44, 1420]);
  // Built-up districts: [outline, street angle, block width, block height, colour]
  const zones = [
    [[590, 130, 640, 60, 1030, 60, 1080, 240, 1050, 500, 960, 430, 620, 360, 560, 230], 2, 25, 23, '#b682c4'],
    [[560, 240, 620, 370, 690, 550, 640, 560, 455, 300], -27, 24, 20, '#b682c4'],
    [[1030, 60, 1250, 60, 1420, 420, 1420, 610, 1230, 600, 1080, 635, 1045, 500, 1085, 250], 2, 23, 25, '#b38ac6'],
    [[1240, 60, 1440, 60, 1524, 200, 1524, 350, 1400, 360, 1280, 170], 38, 22, 18, '#b38ac6'],
    [[1240, 620, 1524, 620, 1524, 740, 1420, 740, 1400, 980, 1270, 980, 1290, 860], 4, 24, 22, '#b090c8'],
    [[620, 360, 960, 430, 1050, 500, 1000, 660, 960, 780, 1020, 940, 940, 1060, 690, 1000, 640, 900, 660, 800, 700, 740, 660, 640, 700, 560], 12, 19, 15, '#a070b6'],
    [[250, 300, 320, 310, 520, 620, 480, 600, 320, 490], 40, 20, 17, '#ae8cc4'],
    [[44, 1000, 200, 900, 420, 820, 470, 820, 420, 900, 360, 990, 330, 1060, 44, 1060], -28, 19, 17, '#a884c0'],
    [[530, 810, 590, 810, 580, 900, 690, 1000, 830, 1040, 780, 1260, 640, 1190, 540, 1160, 520, 1000], 10, 25, 27, '#ae96cc'],
    [[840, 1040, 1010, 980, 1160, 1130, 1290, 1200, 1330, 1340, 1230, 1515, 640, 1515, 800, 1300, 900, 1160], 28, 24, 21, '#ac8cca'],
    [[1100, 950, 1250, 980, 1400, 1000, 1480, 1010, 1440, 1160, 1340, 1320, 1290, 1200, 1120, 1030], 32, 24, 22, '#ac8cca'],
    [[1524, 1050, 1524, 1515, 1390, 1515, 1360, 1320, 1440, 1180], 34, 16, 14, '#9a6fb4'],
    [[44, 1340, 300, 1220, 620, 1200, 780, 1330, 620, 1515, 44, 1515], 26, 24, 20, '#a68cc6'],
    [[1010, 660, 1070, 660, 1070, 830, 1030, 830], 3, 22, 24, '#b094ca']];
  zones.forEach(([pts, deg, bw, bh, col]) => {
    poly(c, '#dcd0e4', pts);
    c.save(); trace(c, pts); c.clip();
    c.translate(pts[0], pts[1]); c.rotate(deg * Math.PI / 180);
    const w = bw - 3, h = bh - 3;
    for (let y = -1500; y < 1500; y += bh) for (let x = -1500; x < 1500; x += bw) {
      if (rnd() < .04) continue;
      c.fillStyle = col; c.globalAlpha = .75 + rnd() * .25;
      c.fillRect(x, y, w, h);
      if (bw > 20 && rnd() < .6) { c.fillStyle = '#d8cbe2'; c.fillRect(x + w * .3, y + h * .3, w * (.15 + rnd() * .3), h * (.15 + rnd() * .3)); }
      c.fillStyle = '#7d4a98'; c.globalAlpha = .22;
      for (let k = 0; k < 4; k++) c.fillRect(x + rnd() * w * .7, y + rnd() * h * .7, 6, 5);
    }
    c.restore();
  });
  // Loose buildings on the outskirts.
  const scatter = (pts, n) => { for (let i = 0; i < n; i++) { const x = 44 + rnd() * 1480, y = 60 + rnd() * 1455; if (inside(pts, x, y)) { c.save(); c.translate(x, y); c.rotate(rnd() * 1.5); c.fillStyle = '#b4a0d0'; c.fillRect(0, 0, 6 + rnd() * 20, 5 + rnd() * 10); c.restore(); } } };
  scatter([230, 65, 400, 65, 560, 160, 520, 200, 300, 250, 240, 200], 1600);
  scatter([120, 790, 300, 740, 460, 740, 450, 790, 200, 880], 1600);
  scatter([1290, 740, 1524, 740, 1524, 1000, 1270, 980], 2600);
  scatter([290, 300, 340, 300, 600, 600, 540, 620], 2400);
  scatter([44, 1200, 600, 1200, 780, 1330, 600, 1515, 44, 1400], 1800);
  scatter([1020, 970, 1524, 1000, 1400, 1300, 1230, 1500], 1400);
  poly(c, green, [380, 240, 530, 200, 550, 240, 455, 300, 420, 300, 350, 270]);
  poly(c, green, [320, 280, 420, 305, 520, 400, 650, 560, 600, 600, 540, 560, 440, 470]);
  poly(c, green, [540, 640, 655, 610, 660, 650, 625, 770, 650, 800, 530, 800]);
  poly(c, green, [1080, 640, 1228, 602, 1290, 860, 1250, 960, 1120, 940, 1080, 920]);
  poly(c, '#b9ccbd', [1125, 880, 1190, 900, 1195, 945, 1125, 940]);
  poly(c, green, [1020, 850, 1075, 850, 1075, 920, 1030, 920]);
  poly(c, green, [1390, 360, 1445, 350, 1420, 415]);
  poly(c, green, [820, 65, 850, 65, 850, 115, 820, 115]);
  poly(c, green, [450, 70, 520, 65, 540, 140, 500, 150]);
  poly(c, green, [545, 1310, 620, 1310, 620, 1400, 560, 1400]);
  poly(c, '#b4a0d0', [1030, 980, 1060, 1000, 1125, 1090, 1100, 1110, 1040, 1040]);
  poly(c, '#ac98cc', [750, 140, 800, 140, 800, 200, 750, 190]);
  poly(c, water, rough([300, 650, 325, 632, 378, 632, 355, 715, 320, 710, 295, 690], 3));
  poly(c, water, [1140, 690, 1165, 683, 1180, 750, 1155, 757]);
  line(c, '#a2bed0', 13, [185, 60, 210, 160, 240, 250, 290, 350, 400, 470, 470, 560, 505, 630, 500, 700, 485, 780, 490, 850, 510, 940, 500, 1040, 500, 1110, 540, 1170, 620, 1185, 680, 1220, 760, 1290]);
  line(c, water, 3, [100, 760, 160, 720, 300, 735, 400, 700, 480, 705]);
  [[44, 290, 130, 340, 230, 350], [44, 570, 120, 575, 180, 550, 240, 570, 310, 560], [44, 620, 200, 600, 330, 610, 400, 690], [90, 750, 130, 700, 290, 660], [70, 470, 180, 480, 290, 490], [110, 190, 60, 290], [130, 420, 200, 465, 250, 450]].forEach(p => line(c, '#dde2ea', 2.5, p));
  const Y = (w, ...p) => line(c, roadY, w, p), O = (w, ...p) => line(c, roadO, w, p);
  O(8, 90, 60, 180, 170, 230, 260, 240, 340, 290, 450, 330, 500, 440, 570, 495, 620, 495, 690, 470, 740, 440, 760);
  O(8, 215, 60, 225, 170, 230, 260, 300, 262, 400, 230, 470, 205, 520, 195);
  O(6, 235, 120, 260, 200, 285, 255);
  O(7, 375, 60, 440, 120, 520, 200, 550, 240); O(7, 1440, 70, 1400, 110, 1330, 135, 1280, 170, 1130, 165);
  O(7, 44, 1020, 180, 930, 260, 860, 440, 760, 520, 690); O(8, 525, 640, 530, 690, 500, 760, 490, 860, 510, 940, 500, 1080, 530, 1160, 620, 1180, 690, 1220, 780, 1300, 830, 1320);
  O(14, 1515, 890, 1480, 1010, 1440, 1160, 1360, 1310, 1270, 1420, 1230, 1515); O(8, 1420, 612, 1524, 650);
  Y(7, 520, 200, 580, 130, 640, 65); Y(6, 580, 130, 1030, 155, 1130, 162, 1270, 172); Y(7, 1025, 65, 1040, 150, 1085, 245, 1070, 400, 1045, 500, 1010, 640, 990, 760, 1020, 945, 1060, 990, 1120, 1020);
  Y(5, 545, 230, 620, 370, 700, 550, 785, 635, 880, 645, 940, 670); Y(5, 860, 60, 910, 240, 1080, 235); Y(4, 910, 240, 812, 275, 785, 385, 755, 590); Y(5, 515, 400, 610, 360, 790, 385, 960, 432, 1045, 500); Y(4, 812, 275, 850, 400, 930, 300, 1080, 295);
  Y(4, 1040, 295, 1010, 370, 960, 432); Y(4, 850, 400, 880, 350, 935, 300); Y(5, 1270, 172, 1422, 425, 1422, 610, 1400, 1000); Y(4, 1130, 162, 1120, 200, 1085, 500, 1080, 640); Y(4, 1180, 160, 1150, 600); Y(4, 1245, 65, 1230, 370, 1225, 600); Y(4, 1310, 310, 1295, 600);
  Y(4, 1120, 240, 1310, 245); Y(4, 1085, 300, 1370, 315); Y(4, 1085, 370, 1400, 380); Y(4, 1050, 500, 1420, 520); Y(4, 1524, 365, 1422, 425, 1300, 520, 1160, 610, 1075, 640); Y(5, 1075, 640, 940, 670, 860, 715); Y(6, 1075, 640, 1080, 920, 1085, 990);
  Y(5, 1075, 640, 1230, 600, 1420, 610); Y(5, 1230, 600, 1290, 860, 1250, 980); Y(5, 470, 800, 680, 808, 830, 870, 1020, 945); Y(4, 600, 810, 570, 890, 600, 950, 690, 1000, 840, 1045, 1000, 985, 1020, 945); Y(4, 755, 800, 740, 890, 690, 1000); Y(4, 650, 890, 755, 870);
  Y(5, 1020, 945, 1100, 1010, 1250, 980, 1500, 1010); Y(4, 1180, 100, 1250, 70); Y(4, 840, 1045, 900, 1160, 1040, 1165, 1150, 1170); Y(4, 690, 1000, 640, 1160); Y(4, 900, 1160, 800, 1320, 640, 1515); Y(4, 1000, 985, 920, 1100); Y(4, 1110, 1020, 1290, 1200, 1430, 1300, 1524, 1330);
  Y(4, 1400, 1000, 1290, 1200); Y(4, 780, 1130, 980, 1330, 1100, 1515); Y(5, 530, 640, 630, 630, 700, 550); Y(4, 285, 262, 340, 275, 420, 305, 470, 390, 515, 400); Y(4, 44, 1060, 320, 1060, 480, 1080); Y(4, 44, 1180, 230, 1160, 320, 1120, 380, 1010); Y(4, 320, 1210, 450, 1170, 480, 1080);
  Y(4, 44, 1370, 190, 1370, 320, 1440, 420, 1515); Y(4, 190, 1370, 330, 1230); Y(4, 290, 1440, 540, 1280); Y(4, 530, 810, 520, 960); Y(4, 650, 810, 650, 900, 690, 1000); Y(4, 420, 820, 430, 890); Y(4, 1420, 460, 1524, 500); Y(4, 1390, 330, 1524, 300); Y(4, 670, 60, 665, 330); Y(4, 740, 130, 730, 370);
  [[785, 385], [960, 432], [1422, 425], [1075, 640], [1232, 372], [685, 998], [840, 1045], [1020, 945], [440, 118]].forEach(([x, y]) => { c.beginPath(); c.ellipse(x, y, 10, 11, 0, 0, 7); c.fillStyle = roadY; c.fill(); });
  [[710, 420, 740, 620], [870, 430, 880, 600], [660, 700, 900, 780], [700, 930, 960, 830], [790, 640, 870, 740], [760, 900, 770, 1010], [860, 840, 900, 1000]].forEach(p => line(c, 'rgba(228,220,236,.6)', 3, p));
  [[748, 757, 24, 20], [862, 778, 22, 16], [915, 470, 22, 18], [730, 505, 14, 16], [810, 945, 20, 18], [780, 450, 14, 14]].forEach(([x, y, w, h]) => { c.fillStyle = '#e6e0ec'; c.fillRect(x, y, w, h); });
}

galapagos(); covid(); hexes(); osm();
```
